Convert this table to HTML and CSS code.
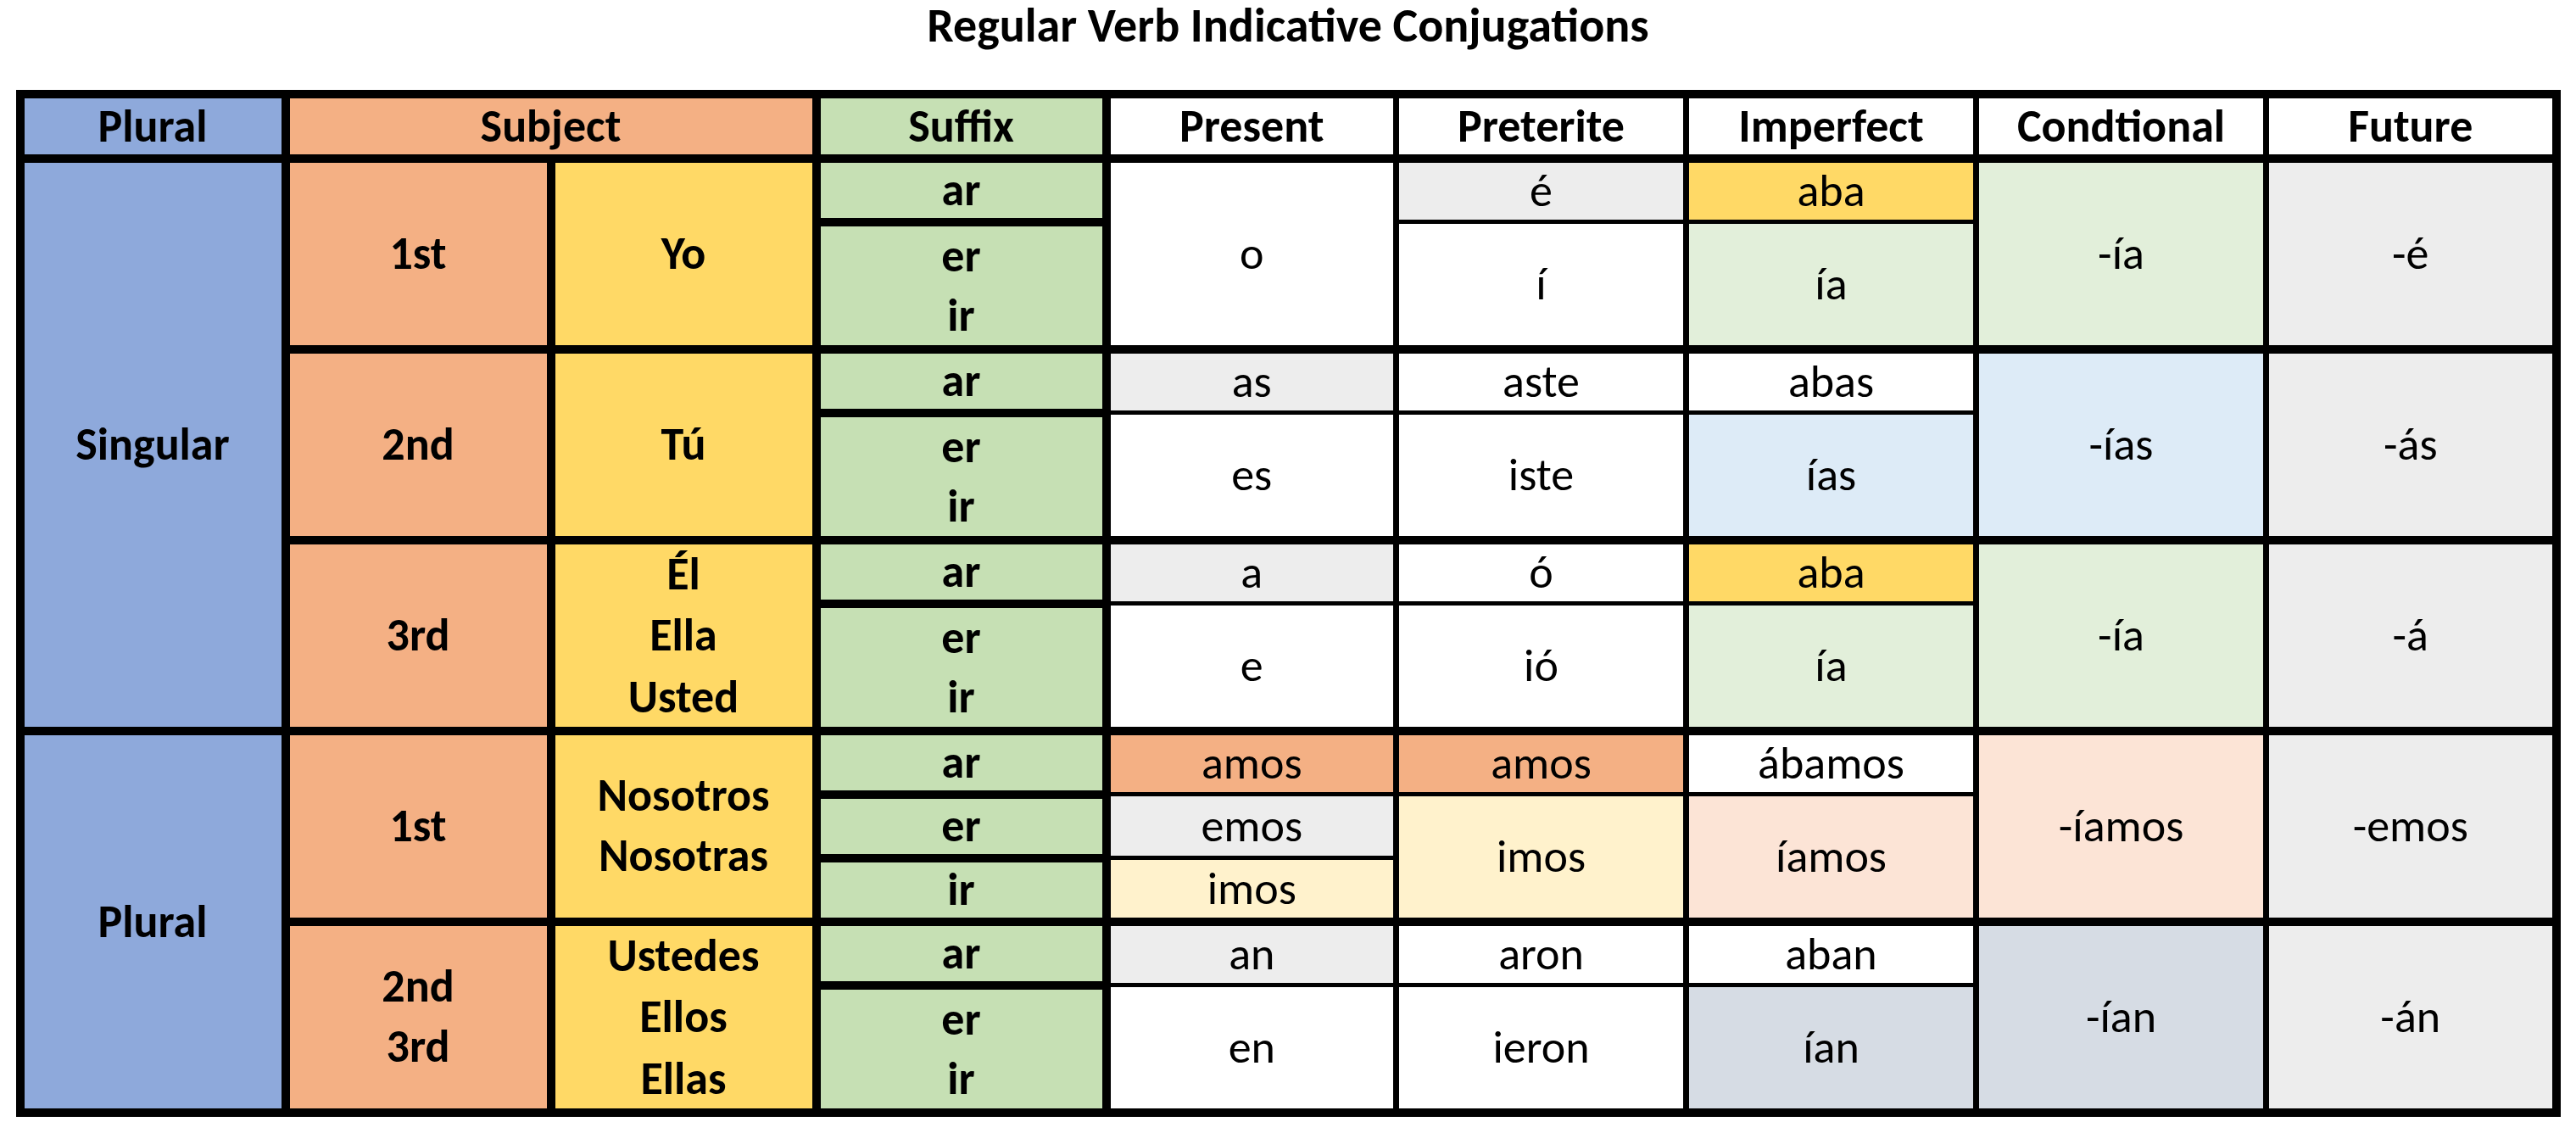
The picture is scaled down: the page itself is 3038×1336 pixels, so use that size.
FILE: index.html
```html
<!DOCTYPE html>
<html lang="es">
<head>
<meta charset="utf-8">
<title>Regular Verb Indicative Conjugations</title>
<link rel="stylesheet" href="styles.css">
</head>
<body>
<h1 class="title">Regular Verb Indicative Conjugations</h1>
<table class="conj">
  <colgroup>
    <col class="w-a"><col class="w-a"><col class="w-a">
    <col class="w-b"><col class="w-b"><col class="w-b"><col class="w-b"><col class="w-b"><col class="w-b">
  </colgroup>
  <thead>
    <tr class="hrow">
      <th class="k blue">Plural</th>
      <th class="k orange" colspan="2">Subject</th>
      <th class="k green">Suffix</th>
      <th class="k5">Present</th>
      <th>Preterite</th>
      <th>Imperfect</th>
      <th>Condtional</th>
      <th class="k9">Future</th>
    </tr>
  </thead>
  <tbody>
    <!-- Group 1: Yo -->
    <tr class="g">
      <td class="k blue" rowspan="9">Singular</td>
      <td class="k orange" rowspan="3">1st</td>
      <td class="k yellow" rowspan="3">Yo</td>
      <td class="k green">ar</td>
      <td class="k5" rowspan="3">o</td>
      <td class="gray">é</td>
      <td class="yellow">aba</td>
      <td class="lgreen" rowspan="3">-ía</td>
      <td class="k9 gray" rowspan="3">-é</td>
    </tr>
    <tr>
      <td class="k green nb-b">er</td>
      <td rowspan="2">í</td>
      <td class="lgreen" rowspan="2">ía</td>
    </tr>
    <tr>
      <td class="k green nb-t">ir</td>
    </tr>
    <!-- Group 2: Tú -->
    <tr class="g">
      <td class="k orange" rowspan="3">2nd</td>
      <td class="k yellow" rowspan="3">Tú</td>
      <td class="k green">ar</td>
      <td class="k5 gray">as</td>
      <td>aste</td>
      <td>abas</td>
      <td class="lblue" rowspan="3">-ías</td>
      <td class="k9 gray" rowspan="3">-ás</td>
    </tr>
    <tr>
      <td class="k green nb-b">er</td>
      <td class="k5" rowspan="2">es</td>
      <td rowspan="2">iste</td>
      <td class="lblue" rowspan="2">ías</td>
    </tr>
    <tr>
      <td class="k green nb-t">ir</td>
    </tr>
    <!-- Group 3: Él -->
    <tr class="g">
      <td class="k orange" rowspan="3">3rd</td>
      <td class="k yellow nb-b">Él</td>
      <td class="k green">ar</td>
      <td class="k5 gray">a</td>
      <td>ó</td>
      <td class="yellow">aba</td>
      <td class="lgreen" rowspan="3">-ía</td>
      <td class="k9 gray" rowspan="3">-á</td>
    </tr>
    <tr>
      <td class="k yellow nb-t nb-b">Ella</td>
      <td class="k green nb-b">er</td>
      <td class="k5" rowspan="2">e</td>
      <td rowspan="2">ió</td>
      <td class="lgreen" rowspan="2">ía</td>
    </tr>
    <tr>
      <td class="k yellow nb-t">Usted</td>
      <td class="k green nb-t">ir</td>
    </tr>
    <!-- Group 4: Nosotros -->
    <tr class="g">
      <td class="k blue" rowspan="6">Plural</td>
      <td class="k orange" rowspan="3">1st</td>
      <td class="k yellow" rowspan="3"><div class="lines">Nosotros<br>Nosotras</div></td>
      <td class="k green">ar</td>
      <td class="k5 orange">amos</td>
      <td class="orange">amos</td>
      <td>ábamos</td>
      <td class="lorange" rowspan="3">-íamos</td>
      <td class="k9 gray" rowspan="3">-emos</td>
    </tr>
    <tr>
      <td class="k green">er</td>
      <td class="k5 gray">emos</td>
      <td class="lyellow" rowspan="2">imos</td>
      <td class="lorange" rowspan="2">íamos</td>
    </tr>
    <tr>
      <td class="k green">ir</td>
      <td class="k5 lyellow">imos</td>
    </tr>
    <!-- Group 5: Ustedes -->
    <tr class="g">
      <td class="k orange" rowspan="3"><div class="lines">2nd<br>3rd</div></td>
      <td class="k yellow nb-b">Ustedes</td>
      <td class="k green">ar</td>
      <td class="k5 gray">an</td>
      <td>aron</td>
      <td>aban</td>
      <td class="gblue" rowspan="3">-ían</td>
      <td class="k9 gray" rowspan="3">-án</td>
    </tr>
    <tr>
      <td class="k yellow nb-t nb-b">Ellos</td>
      <td class="k green nb-b">er</td>
      <td class="k5" rowspan="2">en</td>
      <td rowspan="2">ieron</td>
      <td class="gblue" rowspan="2">ían</td>
    </tr>
    <tr>
      <td class="k yellow nb-t">Ellas</td>
      <td class="k green nb-t">ir</td>
    </tr>
  </tbody>
</table>
</body>
</html>
```

FILE: styles.css
```css
html, body {
  margin: 0;
  padding: 0;
  background: #ffffff;
}

body {
  font-family: Carlito, Lato, "Open Sans", sans-serif;
  color: #000000;
}

.title {
  margin: 0;
  font-size: 56px;
  font-weight: 700;
  line-height: 1.1;
  text-align: center;
}

.conj {
  margin: 44px auto 0 auto;
  width: 3000px;
  table-layout: fixed;
  border-collapse: collapse;
  border: 10px solid #000;
}

.w-a { width: 313px; }
.w-b { width: 342px; }

.conj th,
.conj td {
  padding: 0;
  text-align: center;
  vertical-align: middle;
  font-size: 54px;
  line-height: 1.15;
  white-space: nowrap;
  border-style: solid;
  border-color: #000;
  border-width: 5px 7px;
  background: #ffffff;
}

.conj th {
  font-weight: 700;
  border-top-width: 10px;
  border-bottom-width: 10px;
}

.conj .hrow { height: 76px; }
.conj tbody tr { height: 75px; }

.conj tr.g > td { border-top-width: 10px; }

/* key columns (Plural / Subject / Suffix) : bold, thick borders */
.conj .k {
  font-weight: 700;
  border-width: 10px;
}

.conj .k5 { border-left-width: 10px; }
.conj .k9 { border-right-width: 10px; }

.conj .nb-b { border-bottom-style: none; }
.conj .nb-t { border-top-style: none; }

.lines { line-height: 71px; }

/* fills */
.conj .blue    { background: #8ea9db; }
.conj .orange  { background: #f4b084; }
.conj .yellow  { background: #ffd966; }
.conj .green   { background: #c6e0b4; }
.conj .gray    { background: #ededed; }
.conj .lgreen  { background: #e2efda; }
.conj .lblue   { background: #ddebf7; }
.conj .lorange { background: #fce4d6; }
.conj .lyellow { background: #fff2cc; }
.conj .gblue   { background: #d6dce4; }
```
